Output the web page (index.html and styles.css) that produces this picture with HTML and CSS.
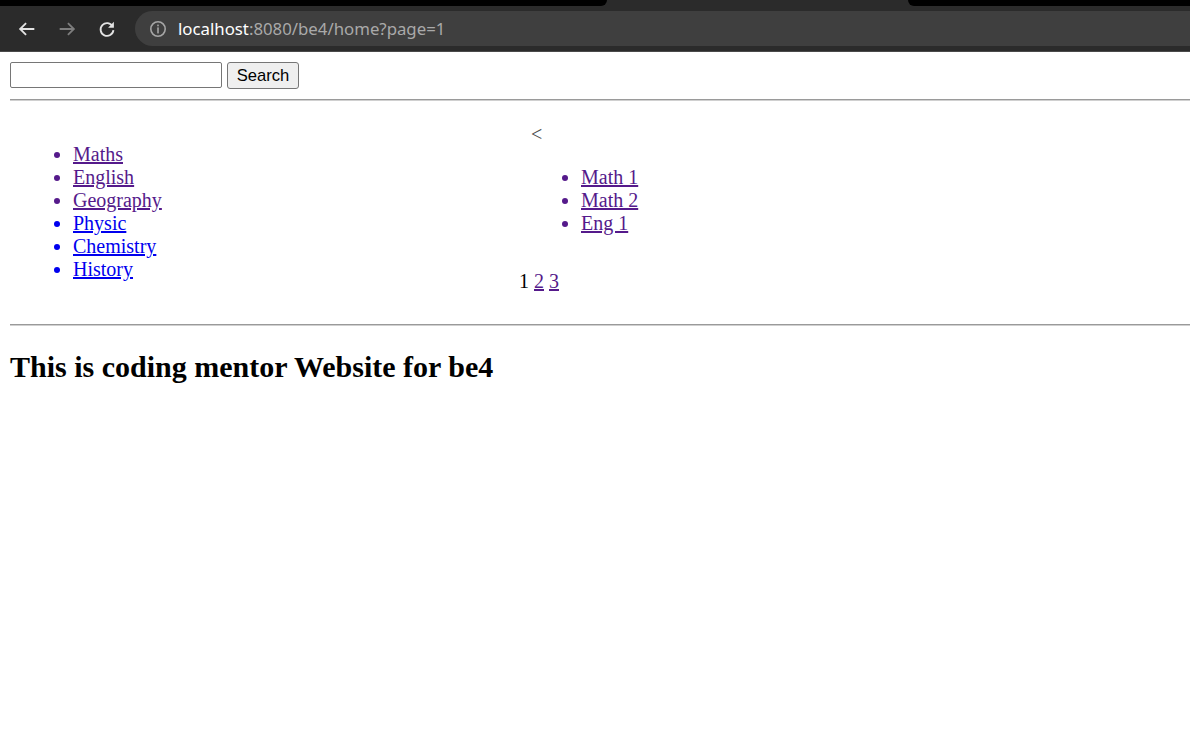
FILE: index.html
```html
<!DOCTYPE html>
<html>
<head>
<meta charset="utf-8">
<title>be4 home</title>
<link rel="stylesheet" href="styles.css">
</head>
<body>
<div class="chrome">
  <div class="tabstrip">
    <div class="strip-left"></div>
    <div class="strip-tab"></div>
    <div class="strip-right"></div>
  </div>
  <div class="toolbar">
    <div class="navbtn">
      <svg width="22" height="22" viewBox="0 0 24 24"><path d="M20 12H5M11 5.5L4.5 12L11 18.5" fill="none" stroke="#e3e3e3" stroke-width="2"/></svg>
    </div>
    <div class="navbtn">
      <svg width="22" height="22" viewBox="0 0 24 24"><path d="M4 12H19M13 5.5L19.5 12L13 18.5" fill="none" stroke="#7d7d7d" stroke-width="2"/></svg>
    </div>
    <div class="navbtn">
      <svg width="22" height="22" viewBox="0 0 24 24"><path d="M18.2 9.2A7 7 0 1 0 19 13.2" fill="none" stroke="#e3e3e3" stroke-width="2"/><path d="M19.5 4.2V10.5H13.2Z" fill="#e3e3e3"/></svg>
    </div>
    <div class="omnibox">
      <svg class="info" width="18" height="18" viewBox="0 0 18 18"><circle cx="9" cy="9" r="7.2" fill="none" stroke="#a6a6a6" stroke-width="1.6"/><rect x="8.2" y="4.6" width="1.6" height="1.7" fill="#a6a6a6"/><rect x="8.2" y="7.4" width="1.6" height="6" fill="#a6a6a6"/></svg>
      <span class="url"><span class="host">localhost</span>:8080/be4/home?page=1</span>
    </div>
  </div>
</div>

<div class="page">
  <form class="search">
    <input class="search-input" type="text">
    <button class="search-btn" type="button">Search</button>
  </form>
  <hr class="rule">
  <div class="cols">
    <div class="left">
      <ul class="list">
        <li class="visited"><a href="#">Maths</a></li>
        <li class="visited"><a href="#">English</a></li>
        <li class="visited"><a href="#">Geography</a></li>
        <li class="fresh"><a href="#">Physic</a></li>
        <li class="fresh"><a href="#">Chemistry</a></li>
        <li class="fresh"><a href="#">History</a></li>
      </ul>
    </div>
    <div class="right">
      <div class="prev">&lt;</div>
      <ul class="list sub">
        <li class="visited"><a href="#">Math 1</a></li>
        <li class="visited"><a href="#">Math 2</a></li>
        <li class="visited"><a href="#">Eng 1</a></li>
      </ul>
      <div class="pager">1 <a class="plink" href="#">2</a> <a class="plink" href="#">3</a></div>
    </div>
  </div>
  <hr class="rule">
  <h2 class="title">This is coding mentor Website for be4</h2>
</div>
</body>
</html>
```

FILE: styles.css
```css
html, body {
  margin: 0;
  padding: 0;
  background: #ffffff;
}

body {
  font-family: "Liberation Serif", "Times New Roman", serif;
  font-size: 20px;
  color: #000;
}

/* ---------- browser chrome ---------- */
.chrome {
  background: #2b2b2b;
  height: 52px;
  display: flex;
  flex-direction: column;
}

.tabstrip {
  display: flex;
  height: 6px;
  background: #2b2b2b;
}

.strip-left {
  width: 607px;
  background: #000;
  border-bottom-right-radius: 6px;
}

.strip-tab {
  width: 301px;
}

.strip-right {
  flex: 1;
  background: #000;
  border-bottom-left-radius: 6px;
}

.toolbar {
  flex: 1;
  display: flex;
  align-items: center;
  padding-left: 7px;
  border-bottom: 1px solid #4a4a4a;
}

.navbtn {
  width: 40px;
  height: 40px;
  display: flex;
  align-items: center;
  justify-content: center;
}

.omnibox {
  margin-left: 8px;
  flex: 1;
  height: 35px;
  background: #3f3f3f;
  border-radius: 18px 0 0 18px;
  display: flex;
  align-items: center;
  padding-left: 14px;
}

.info {
  display: block;
}

.url {
  margin-left: 11px;
  font-family: "Noto Sans", "Open Sans", sans-serif;
  font-size: 16.8px;
  color: #a9a9a9;
}

.host {
  color: #ffffff;
}

/* ---------- page ---------- */
.page {
  padding: 10px 0 10px 10px;
}

.search {
  display: flex;
  align-items: flex-start;
  gap: 5px;
  margin: 0;
  height: 27px;
}

.search-input {
  box-sizing: border-box;
  width: 212px;
  height: 26px;
  margin: 0;
  border: 1px solid #767676;
  border-radius: 2px;
  padding: 1px 2px;
  background: #fff;
}

.search-btn {
  box-sizing: border-box;
  width: 72px;
  height: 27px;
  margin: 0;
  font-family: "Liberation Sans", Arial, sans-serif;
  font-size: 16.6px;
  color: #000;
  background: #efefef;
  border: 1px solid #767676;
  border-radius: 3px;
  padding: 0;
}

.rule {
  margin: 10px 0;
  border: 0;
  border-top: 1px solid #9a9a9a;
  border-bottom: 1px solid #d0d0d0;
  height: 0;
}

.cols {
  display: grid;
  grid-template-columns: 509px auto;
  padding: 12px 0 13px;
  line-height: 23px;
}

.left {
  padding-left: 13px;
}

.list {
  margin: 20px 0;
  padding-left: 50px;
}

.visited {
  color: #551a8b;
}

.fresh {
  color: #0000ee;
}

.list a {
  color: inherit;
}

.prev {
  padding-left: 12px;
  color: #4a4a4a;
}

.sub {
  margin-left: 12px;
}

.pager {
  margin-top: 35px;
}

.plink {
  color: #551a8b;
}

.title {
  font-size: 30px;
  font-weight: bold;
  margin: 24px 0 0;
  line-height: 34px;
}
```
